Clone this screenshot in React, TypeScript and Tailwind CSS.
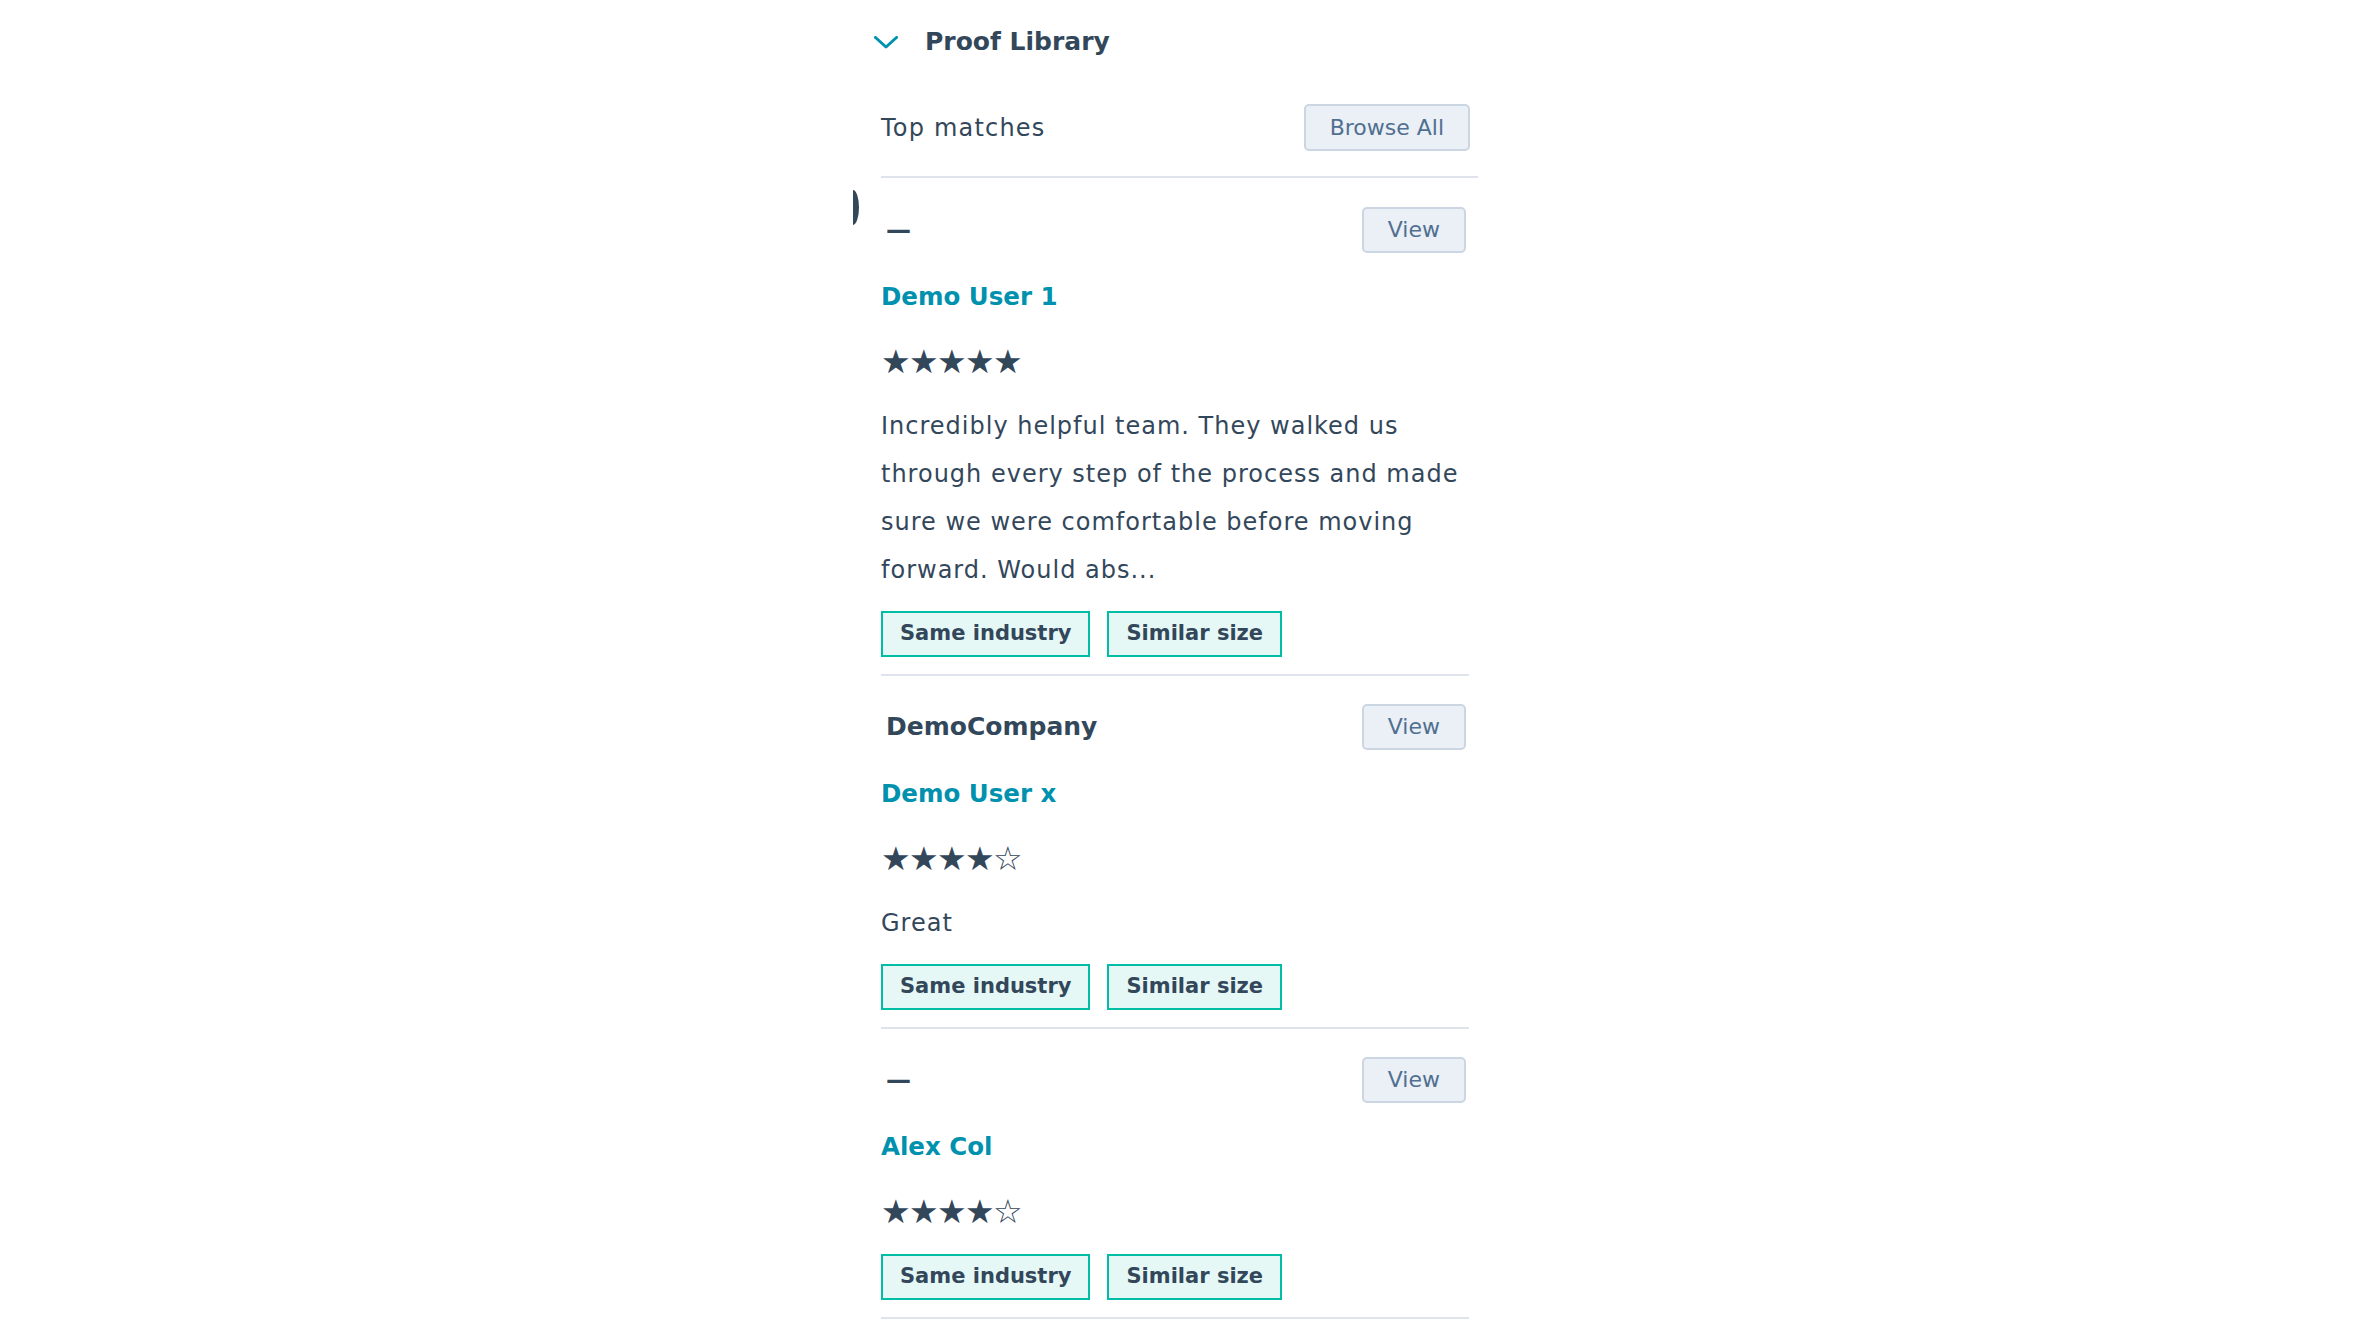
import React from 'react';

interface Match {
  company: string | null;
  name: string;
  rating: number;
  text?: string;
  tags: string[];
}

const matches: Match[] = [
  {
    company: null,
    name: 'Demo User 1',
    rating: 5,
    text: 'Incredibly helpful team. They walked us through every step of the process and made sure we were comfortable before moving forward. Would abs...',
    tags: ['Same industry', 'Similar size'],
  },
  {
    company: 'DemoCompany',
    name: 'Demo User x',
    rating: 4,
    text: 'Great',
    tags: ['Same industry', 'Similar size'],
  },
  {
    company: null,
    name: 'Alex Col',
    rating: 4,
    tags: ['Same industry', 'Similar size'],
  },
];

const SoftButton: React.FC<{ label: string }> = ({ label }) => (
  <button className="h-[46px] rounded-[5px] border-2 border-[#cbd6e2] bg-[#eaf0f6] px-6 text-[22px] leading-none text-[#516f90]">
    {label}
  </button>
);

const MatchCard: React.FC<{ match: Match; first: boolean }> = ({ match, first }) => {
  const stars = '★★★★★'.slice(0, match.rating) + '☆☆☆☆☆'.slice(0, 5 - match.rating);

  return (
    <div className={`relative ${first ? 'pt-[29px]' : 'pt-[28px]'}`}>
      {first && (
        <svg className="absolute left-[-28px] top-[12px]" width="6" height="35" viewBox="0 0 6 35">
          <path d="M0 0 A6 17.5 0 0 1 0 35 Z" fill="#33475b" />
        </svg>
      )}
      <div className="flex h-[46px] items-center justify-between pr-[3px]">
        <span className="pl-[5px] text-[25px] font-bold leading-8">{match.company ?? '—'}</span>
        <SoftButton label="View" />
      </div>
      <div className="mt-[28px] text-[24.5px] font-bold leading-8 text-[#0091ae]">{match.name}</div>
      <div className="mt-[33px] text-[33px] leading-8 tracking-[-1.6px]">{stars}</div>
      {match.text && (
        <p className="mt-[24px] text-[24px] leading-[48px] tracking-[1px]">{match.text}</p>
      )}
      <div className={`flex gap-[17px] ${match.text ? 'mt-[17px]' : 'mt-[26px]'}`}>
        {match.tags.map((tag) => (
          <span
            key={tag}
            className="flex h-[46px] items-center border-2 border-[#00bda5] bg-[#e5f8f6] px-[17px] text-[21px] font-bold"
          >
            {tag}
          </span>
        ))}
      </div>
      <div className="mt-[17px] h-[2px] bg-[#dfe3eb]" />
    </div>
  );
};

export default function App() {
  return (
    <div className="min-h-screen bg-white font-['DejaVu_Sans',sans-serif] text-[#33475b]">
      <div className="ml-[881px] w-[597px] pt-6">
        <div className="-ml-[7px] flex h-9 items-center">
          <svg width="24" height="13" viewBox="0 0 24 13" fill="none">
            <path d="M1.5 1.5 L12 11 L22.5 1.5" stroke="#0091ae" strokeWidth="3" strokeLinecap="round" strokeLinejoin="round" />
          </svg>
          <h2 className="ml-[27px] text-[25px] font-bold leading-9">Proof Library</h2>
        </div>

        <div className="mt-[44px] flex items-center justify-between pr-[8px]">
          <span className="text-[24px] leading-8 tracking-[1.2px]">Top matches</span>
          <button className="h-[47px] rounded-[5px] border-2 border-[#cbd6e2] bg-[#eaf0f6] px-6 text-[22px] leading-none text-[#516f90]">
            Browse All
          </button>
        </div>
        <div className="mt-[25px] h-[2px] bg-[#dfe3eb]" />

        <div className="w-[588px]">
          {matches.map((m, i) => (
            <MatchCard key={m.name} match={m} first={i === 0} />
          ))}
        </div>
      </div>
    </div>
  );
}
